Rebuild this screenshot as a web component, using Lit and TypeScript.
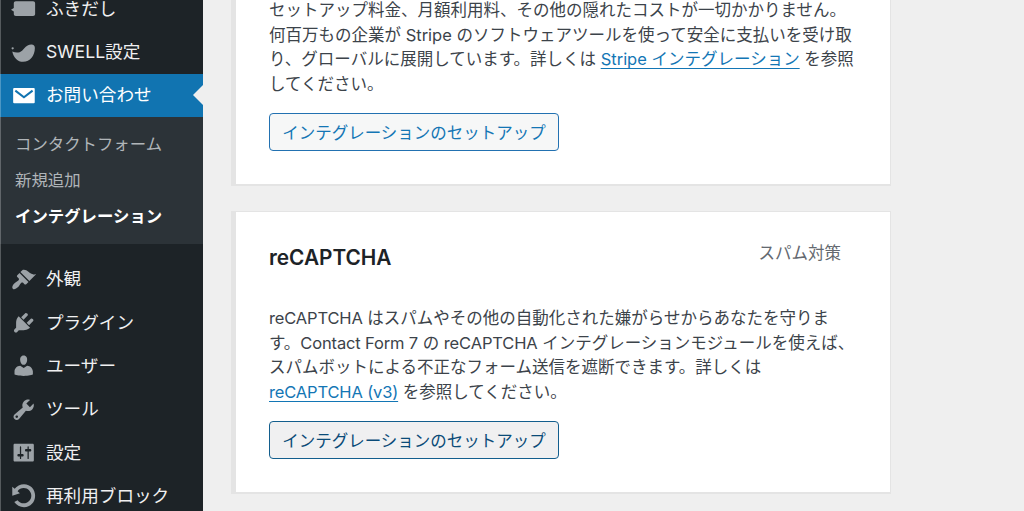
import { LitElement, css, html, svg } from 'lit'
import { customElement, property } from 'lit/decorators.js'
import { classMap } from 'lit/directives/class-map.js'

const icons: Record<string, unknown> = {
  balloon: svg`<path d="M3.800 4.200h13.600c.9 0 1.600.7 1.600 1.600v8.400c0 .9-.7 1.600-1.600 1.600H3.800c-.9 0-1.600-.7-1.600-1.600v-2l-2.200-1.400 2.200-1.400V5.800c0-.9.7-1.600 1.600-1.600z"/>`,
  swell: svg`<circle cx="1.300" cy="7.300" r=".9"/><path d="M1 9.800c2.600 1.200 5.500 1.400 7.700-.6 2.100-1.900 3.400-4.700 7.200-4.900 1.900-.1 2.900.8 2.900 2.800 0 5.900-3.700 10.900-9.300 10.900-4.200 0-7.500-3.300-8.500-8.200z"/>`,
  mail: svg`<rect x="1.700" y="4" width="17" height="12" rx=".8"/><path class="flap" d="M3.400 6l6.800 5.200L17 6"/>`,
  appearance: svg`<path d="M14.480 11.060L7.410 3.990l1.500-1.500c.5-.56 2.300-.47 3.510.32 1.210.8 1.430 1.280 2.910 2.100 1.180.64 2.450 1.260 4.450.85zm-.71.71L6.700 4.700 4.930 6.470c-.39.39-.39 1.020 0 1.410l1.060 1.060c.39.39.39 1.030 0 1.420-.6.6-1.430 1.110-2.210 1.690-.35.26-.7.53-1.010.84C1.430 14.230.4 16.080 1.400 17.070c.99 1 2.840-.03 4.180-1.360.31-.31.58-.66.85-1.020.57-.78 1.080-1.610 1.690-2.210.39-.39 1.020-.39 1.410 0l1.060 1.060c.39.39 1.020.39 1.410 0z"/>`,
  plugins: svg`<path d="M13.110 4.360L9.870 7.600 8 5.730l3.240-3.240c.35-.34 1.050-.2 1.560.32.52.51.66 1.210.31 1.550zm-8 1.770l.91-1.120 9.010 9.010-1.190.84c-.71.71-2.630 1.160-3.820 1.160H6.140L4.900 17.260c-.59.59-1.540.59-2.120 0-.59-.58-.59-1.530 0-2.120l1.240-1.240v-3.880c0-1.130.4-3.190 1.090-3.890zm7.260 3.970l3.240-3.240c.34-.35 1.040-.21 1.550.31.52.51.66 1.210.31 1.550l-3.240 3.250z"/>`,
  users: svg`<path d="M10 9.250c-2.270 0-2.730-3.440-2.730-3.440C7 4.020 7.820 2 9.970 2c2.160 0 2.980 2.020 2.710 3.810 0 0-.41 3.440-2.680 3.440zm0 2.570L12.720 10c2.390 0 4.520 2.330 4.520 4.530v2.490s-3.650 1.130-7.240 1.130c-3.650 0-7.240-1.130-7.240-1.130v-2.490c0-2.250 1.940-4.480 4.470-4.480z"/>`,
  tools: svg`<path d="M16.680 9.770c-1.340 1.340-3.300 1.670-4.950.99l-5.410 6.520c-.99.99-2.590.99-3.580 0s-.99-2.590 0-3.570l6.520-5.420c-.68-1.650-.35-3.610.99-4.950 1.280-1.280 3.120-1.620 4.720-1.060l-2.890 2.890 2.820 2.820 2.860-2.870c.53 1.580.18 3.390-1.080 4.650zM3.810 16.210c.4.39 1.040.39 1.430 0 .4-.4.4-1.040 0-1.430-.39-.4-1.030-.4-1.430 0-.39.39-.39 1.030 0 1.430z"/>`,
  settings: svg`<path d="M18 16V4c0-.55-.45-1-1-1H3c-.55 0-1 .45-1 1v12c0 .55.45 1 1 1h14c.55 0 1-.45 1-1zM8 11h1c.55 0 1 .45 1 1s-.45 1-1 1H8v1.500c0 .28-.22.5-.5.5s-.5-.22-.5-.5V13H6c-.55 0-1-.45-1-1s.45-1 1-1h1V5.500c0-.28.22-.5.5-.5s.5.22.5.5V11zm5-2h-1c-.55 0-1-.45-1-1s.45-1 1-1h1V5.500c0-.28.22-.5.5-.5s.5.22.5.5V7h1c.55 0 1 .45 1 1s-.45 1-1 1h-1v5.500c0 .28-.22.5-.5.5s-.5-.22-.5-.5V9z"/>`,
  rotate: svg`<path d="M10.250 1.020c5.100 0 8.750 4.040 8.750 9s-3.650 9-8.750 9c-3.200 0-6.020-1.590-7.680-3.990l2.590-1.520c1.100 1.500 2.860 2.510 4.840 2.510 3.300 0 6-2.790 6-6s-2.700-6-6-6c-1.970 0-3.720 1-4.820 2.490L7 8.020l-6 2v-7L2.890 4.600c1.690-2.170 4.360-3.580 7.360-3.580z"/>`,
}

@customElement('menu-item')
export class MenuItem extends LitElement {
  @property({ type: String }) icon = ''
  @property({ type: String }) label = ''
  @property({ type: Boolean }) current = false

  static styles = css`
    :host {
      display: block;
    }
    .item {
      position: relative;
      display: flex;
      align-items: center;
      height: 43.3px;
      color: #f0f0f1;
      font-size: 17.6px;
      line-height: 24px;
      white-space: nowrap;
    }
    .current {
      background: #1174b1;
      color: #fff;
    }
    .current::after {
      content: '';
      position: absolute;
      right: 0;
      top: 11.5px;
      border: 10.2px solid transparent;
      border-left: 0;
      border-right-color: #efefef;
    }
    .icon {
      display: flex;
      justify-content: center;
      width: 47px;
      margin-right: -1px;
      color: #9ca2a7;
    }
    .current .icon {
      color: #fff;
    }
    svg {
      width: 25.4px;
      height: 25.4px;
      overflow: visible;
      fill: currentColor;
    }
    .flap {
      fill: none;
      stroke: #1174b1;
      stroke-width: 1.6;
    }
  `

  render() {
    return html`
      <div class=${classMap({ item: true, current: this.current })}>
        <span class="icon"><svg viewBox="0 0 20 20">${icons[this.icon]}</svg></span>
        <span>${this.label}</span>
      </div>
    `
  }
}

@customElement('service-card')
export class ServiceCard extends LitElement {
  @property({ type: String }) heading = ''
  @property({ type: String }) category = ''
  @property({ type: Boolean }) hovered = false

  static styles = css`
    :host {
      display: block;
    }
    .card {
      box-sizing: border-box;
      width: 660px;
      height: 283.5px;
      padding: 31px 33px 0;
      background: #fff;
      border: 1px solid #e4e4e4;
      border-left-width: 5px;
      border-bottom-width: 2px;
    }
    .head {
      display: flex;
      justify-content: space-between;
      height: 63.4px;
    }
    h2 {
      margin: 0;
      color: #1d2327;
      font-size: 20.8px;
      font-weight: 600;
      line-height: 30px;
    }
    .category {
      margin-right: 16px;
      color: #646970;
      line-height: 20px;
    }
    .text {
      color: #3c434a;
      line-height: 24.7px;
      white-space: nowrap;
    }
    .button {
      display: flex;
      align-items: center;
      justify-content: center;
      box-sizing: border-box;
      width: 290px;
      height: 38px;
      margin-top: 16px;
      border: 1.3px solid #2271b1;
      border-radius: 4px;
      background: #f6f7f7;
      color: #1376b5;
      font: inherit;
      white-space: nowrap;
    }
    .hovered {
      background: #f0f0f1;
      border-color: #135e8d;
      color: #0a4b78;
    }
  `

  render() {
    return html`
      <div class="card">
        <div class="head">
          <h2>${this.heading}</h2>
          <span class="category">${this.category}</span>
        </div>
        <div class="text"><slot></slot></div>
        <button class=${classMap({ button: true, hovered: this.hovered })}>インテグレーションのセットアップ</button>
      </div>
    `
  }
}

@customElement('app-root')
export class AppRoot extends LitElement {
  static styles = css`
    :host {
      display: flex;
      width: 1024px;
      height: 511px;
      overflow: hidden;
      background: #efefef;
      font-family: Inter, 'Noto Sans CJK JP', sans-serif;
      font-size: 16.5px;
    }
    .sidebar {
      position: relative;
      display: flex;
      flex-direction: column;
      flex: none;
      width: 203px;
      height: 524px;
      margin-top: -13px;
      background: #1d2327;
    }
    .sidebar::before {
      content: '';
      position: absolute;
      z-index: 1;
      inset: 0 auto 0 0;
      width: 1px;
      background: rgba(255, 255, 255, 0.25);
    }
    .submenu {
      margin: 0 0 13.6px;
      padding: 9px 0 10.3px 15px;
      background: #2c3338;
      color: #b0b5b8;
      font-size: 16.4px;
      list-style: none;
      line-height: 36px;
      white-space: nowrap;
    }
    .active {
      color: #fff;
      font-weight: 700;
    }
    .content {
      display: flex;
      flex-direction: column;
      justify-content: flex-end;
      gap: 24.5px;
      padding: 0 0 17px 28px;
    }
    .latin {
      letter-spacing: -0.15px;
    }
    a {
      color: #1376b5;
      text-decoration: underline;
      text-decoration-thickness: 1.3px;
      text-underline-offset: 2.5px;
      text-decoration-skip-ink: none;
    }
  `

  render() {
    return html`
      <nav class="sidebar">
        <menu-item icon="balloon" label="ふきだし"></menu-item>
        <menu-item icon="swell" label="SWELL設定"></menu-item>
        <menu-item icon="mail" label="お問い合わせ" current></menu-item>
        <ul class="submenu">
          <li>コンタクトフォーム</li>
          <li>新規追加</li>
          <li class="active">インテグレーション</li>
        </ul>
        <menu-item icon="appearance" label="外観"></menu-item>
        <menu-item icon="plugins" label="プラグイン"></menu-item>
        <menu-item icon="users" label="ユーザー"></menu-item>
        <menu-item icon="tools" label="ツール"></menu-item>
        <menu-item icon="settings" label="設定"></menu-item>
        <menu-item icon="rotate" label="再利用ブロック"></menu-item>
      </nav>
      <main class="content">
        <service-card>
          セットアップ料金、月額利用料、その他の隠れたコストが一切かかりません。<br />
          何百万もの企業が Stripe のソフトウェアツールを使って安全に支払いを受け取<br />
          り、グローバルに展開しています。詳しくは <a>Stripe インテグレーション</a> を参照<br />
          してください。
        </service-card>
        <service-card heading="reCAPTCHA" category="スパム対策" hovered>
          <span class="latin">reCAPTCHA</span> はスパムやその他の自動化された嫌がらせからあなたを守りま<br />
          す。<span class="latin">Contact Form 7</span> の <span class="latin">reCAPTCHA</span> インテグレーションモジュールを使えば、<br />
          スパムボットによる不正なフォーム送信を遮断できます。詳しくは<br />
          <a class="latin">reCAPTCHA (v3)</a> を参照してください。
        </service-card>
      </main>
    `
  }
}
